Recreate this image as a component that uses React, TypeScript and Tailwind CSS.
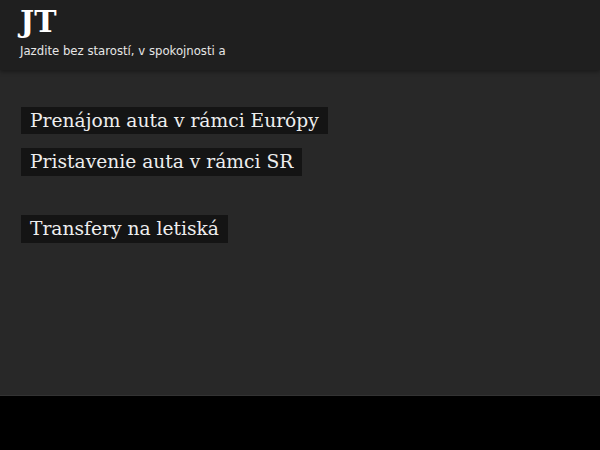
export default function App() {
  const serif = { fontFamily: '"DejaVu Serif", serif' };
  return (
    <div className="w-[600px] h-[450px] bg-black flex flex-col">
      <header className="h-[70px] bg-[#1f1f1f] px-5 pt-[3px] shadow-[0_2px_4px_rgba(0,0,0,0.35)] relative z-10">
        <div className="text-[30px] font-bold leading-[38px] text-white" style={serif}>JT</div>
        <div className="text-[13px] leading-[18px] text-[#e6e6e6] mt-[1px]" style={{ fontFamily: '"DejaVu Sans Condensed", "DejaVu Sans", sans-serif', fontStretch: 'condensed' }}>
          Jazdite bez starostí, v spokojnosti a
        </div>
      </header>
      <main className="h-[326px] bg-[#282828] border-b border-[#333] px-[21px] pt-[37px] flex flex-col items-start" style={serif}>
        <div className="bg-[#141414] text-[#eeeeee] text-[18.67px] leading-[27px] px-[9px] h-[27px]">Prenájom auta v rámci Európy</div>
        <div className="bg-[#141414] text-[#eeeeee] text-[18.67px] leading-[28px] px-[9px] h-[28px] mt-[14px]">Pristavenie auta v rámci SR</div>
        <div className="bg-[#141414] text-[#eeeeee] text-[18.67px] leading-[28px] px-[9px] h-[28px] mt-[39px]">Transfery na letiská</div>
      </main>
    </div>
  );
}
